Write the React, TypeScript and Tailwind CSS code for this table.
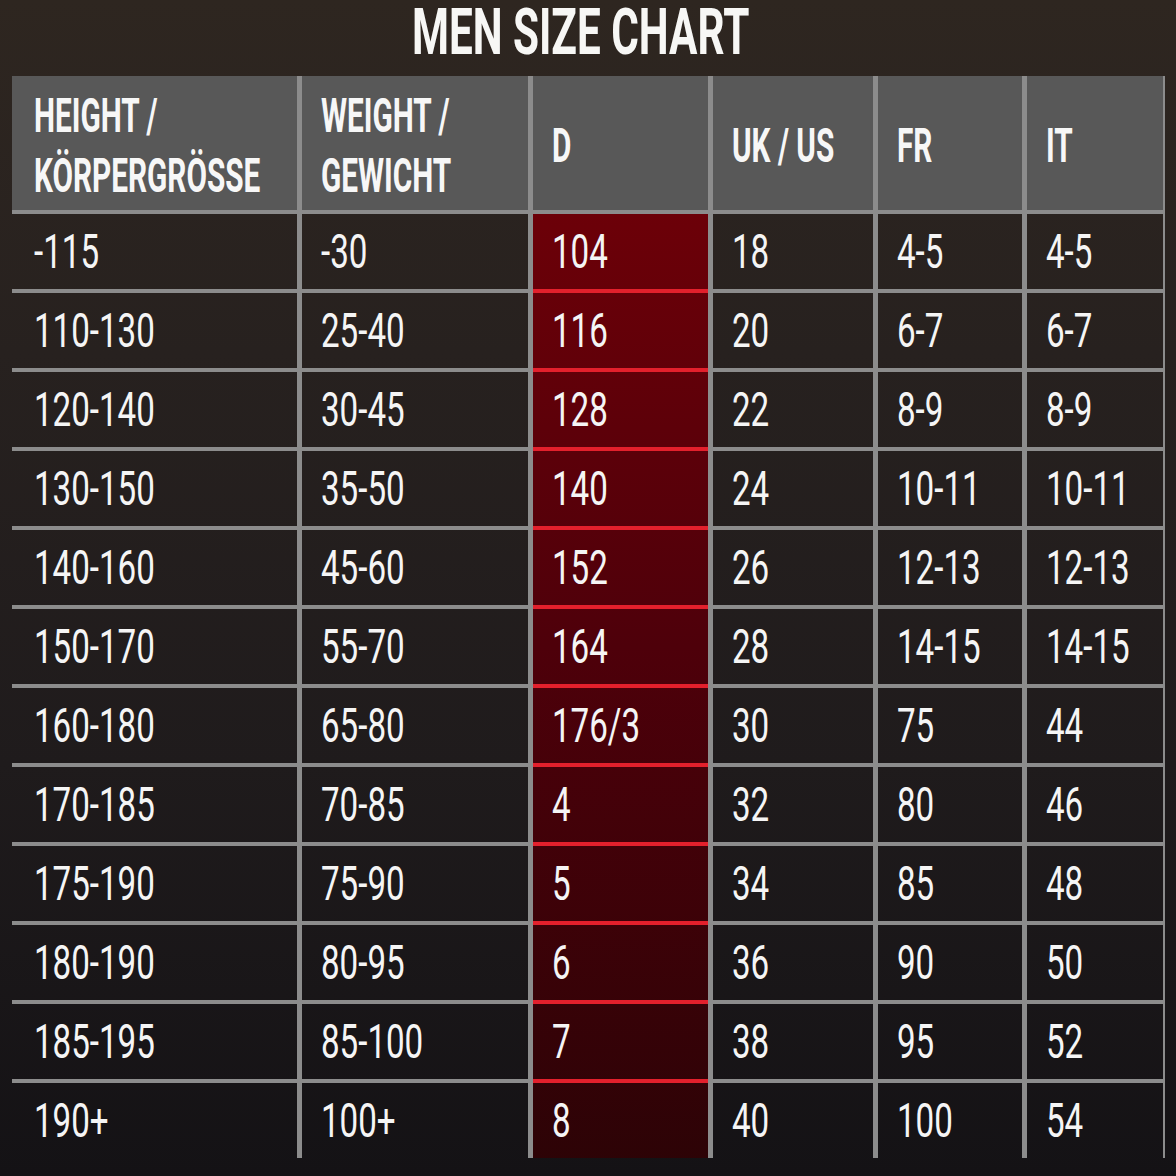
import React from 'react';

const pageBg =
  'bg-fixed bg-[linear-gradient(180deg,#2e2620_0%,#27211f_30%,#1f1b1c_65%,#141215_100%)]';
const redBg =
  'bg-fixed bg-[linear-gradient(180deg,#6c0008_18%,#4e000a_55%,#2c0306_100%)]';

const headers = [
  ['HEIGHT /', 'KÖRPERGRÖSSE'],
  ['WEIGHT /', 'GEWICHT'],
  ['D'],
  ['UK / US'],
  ['FR'],
  ['IT'],
];

const rows = [
  ['-115', '-30', '104', '18', '4-5', '4-5'],
  ['110-130', '25-40', '116', '20', '6-7', '6-7'],
  ['120-140', '30-45', '128', '22', '8-9', '8-9'],
  ['130-150', '35-50', '140', '24', '10-11', '10-11'],
  ['140-160', '45-60', '152', '26', '12-13', '12-13'],
  ['150-170', '55-70', '164', '28', '14-15', '14-15'],
  ['160-180', '65-80', '176/3', '30', '75', '44'],
  ['170-185', '70-85', '4', '32', '80', '46'],
  ['175-190', '75-90', '5', '34', '85', '48'],
  ['180-190', '80-95', '6', '36', '90', '50'],
  ['185-195', '85-100', '7', '38', '95', '52'],
  ['190+', '100+', '8', '40', '100', '54'],
];

function Cell({ value, col, last }: { value: string; col: number; last: boolean }) {
  const isD = col === 2;
  const bg = isD ? redBg : pageBg;
  const border = last ? 'h-[75px]' : isD ? 'h-[79px] border-b-4 border-[#e3202c]' : 'h-[79px] border-b-4 border-[#8c8c8c]';
  const pad = col === 0 ? 'pl-[22px]' : 'pl-[19px]';
  return (
    <div className={`flex items-center ${bg} ${border} ${pad}`}>
      <span className="inline-block origin-left scale-x-[0.69] whitespace-nowrap text-[48px] leading-[75px] text-[#f5f5f5]">
        {value}
      </span>
    </div>
  );
}

export default function App() {
  return (
    <div
      className={`h-[1176px] w-[1176px] overflow-hidden ${pageBg}`}
      style={{ fontFamily: 'Roboto, "Liberation Sans", sans-serif' }}
    >
      <div className="flex h-[76px] items-start justify-center pr-[14px]">
        <span className="inline-block origin-center scale-x-[0.66] whitespace-nowrap text-[64px] font-bold leading-[66px] text-[#f7f7f5]">
          MEN SIZE CHART
        </span>
      </div>

      <div className="ml-[12px] grid w-fit grid-cols-[285px_226px_175px_160px_144px_136px] gap-x-[5px] bg-[#8c8c8c] pr-[2px]">
        {headers.map((lines, i) => (
          <div
            key={i}
            className={`flex h-[138px] flex-col justify-center border-b-4 border-[#8c8c8c] bg-[#585858] pt-[6px] ${i === 0 ? 'pl-[22px]' : 'pl-[19px]'}`}
          >
            {lines.map((line) => (
              <span
                key={line}
                className="inline-block origin-left scale-x-[0.62] whitespace-nowrap text-[48px] font-bold leading-[60px] text-[#f7f7f7]"
              >
                {line}
              </span>
            ))}
          </div>
        ))}
        {rows.map((row, r) =>
          row.map((value, c) => (
            <Cell key={`${r}-${c}`} value={value} col={c} last={r === rows.length - 1} />
          )),
        )}
      </div>
    </div>
  );
}
